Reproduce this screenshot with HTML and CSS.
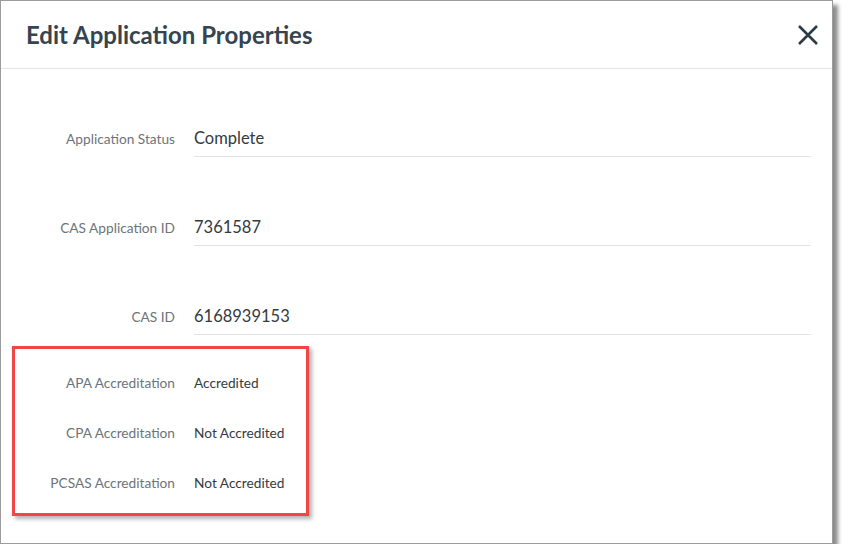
FILE: index.html
```html
<!DOCTYPE html>
<html lang="en">
<head>
    <meta charset="UTF-8">
    <title>Edit Application Properties</title>
    <link rel="stylesheet" href="styles.css">
</head>
<body>
    <div class="dialog">
        <div class="dialog-header">
            <h1>Edit Application Properties</h1>
            <button class="close" aria-label="Close">
                <svg width="22" height="22" viewBox="0 0 22 22">
                    <path d="M2 2 L20 20 M20 2 L2 20" stroke="#2b3b48" stroke-width="2.6" fill="none"/>
                </svg>
            </button>
        </div>

        <div class="dialog-body">
            <div class="field">
                <label>Application Status</label>
                <div class="field-value">Complete</div>
            </div>
            <div class="field">
                <label>CAS Application ID</label>
                <div class="field-value">7361587</div>
            </div>
            <div class="field field-last">
                <label>CAS ID</label>
                <div class="field-value">6168939153</div>
            </div>

            <div class="accreditation">
                <div class="static-row">
                    <label>APA Accreditation</label>
                    <span>Accredited</span>
                </div>
                <div class="static-row">
                    <label>CPA Accreditation</label>
                    <span>Not Accredited</span>
                </div>
                <div class="static-row">
                    <label>PCSAS Accreditation</label>
                    <span>Not Accredited</span>
                </div>
            </div>
        </div>
    </div>
</body>
</html>
```

FILE: styles.css
```css
body {
    margin: 0;
    background: #fff;
    font-family: Lato, 'Open Sans', sans-serif;
}

.dialog {
    box-sizing: border-box;
    width: 833px;
    height: 544px;
    border: 1px solid #9c9c9c;
    background: #fff;
    box-shadow: 5px 5px 4px rgba(0, 0, 0, 0.45);
}

.dialog-header {
    display: flex;
    align-items: center;
    justify-content: space-between;
    height: 67px;
    padding: 0 13px 0 25px;
    border-bottom: 1px solid #e6e6e6;
}

.dialog-header h1 {
    margin: 0;
    font-size: 24px;
    font-weight: 700;
    color: #36444f;
}

.close {
    display: flex;
    padding: 0;
    border: none;
    background: none;
    cursor: pointer;
}

.dialog-body {
    padding: 51px 21px 0 0;
}

.field {
    display: grid;
    grid-template-columns: 174px 1fr;
    column-gap: 19px;
    align-items: center;
    margin-bottom: 52px;
}

.field-last {
    margin-bottom: 22px;
}

label {
    text-align: right;
    font-size: 13.7px;
    color: #6c747a;
}

.field-value {
    height: 36px;
    line-height: 36px;
    border-bottom: 1px solid #e3e3e3;
    font-size: 16.5px;
    color: #343b41;
}

.accreditation {
    position: relative;
}

.accreditation::before {
    content: "";
    position: absolute;
    left: 11px;
    top: -11px;
    width: 291px;
    height: 164px;
    border: 3px solid #f24545;
    box-shadow: 3px 3px 4px rgba(0, 0, 0, 0.3);
}

.static-row {
    display: grid;
    grid-template-columns: 174px 1fr;
    column-gap: 19px;
    align-items: center;
    height: 50px;
}

.static-row span {
    font-size: 13.7px;
    color: #343b41;
}
```
